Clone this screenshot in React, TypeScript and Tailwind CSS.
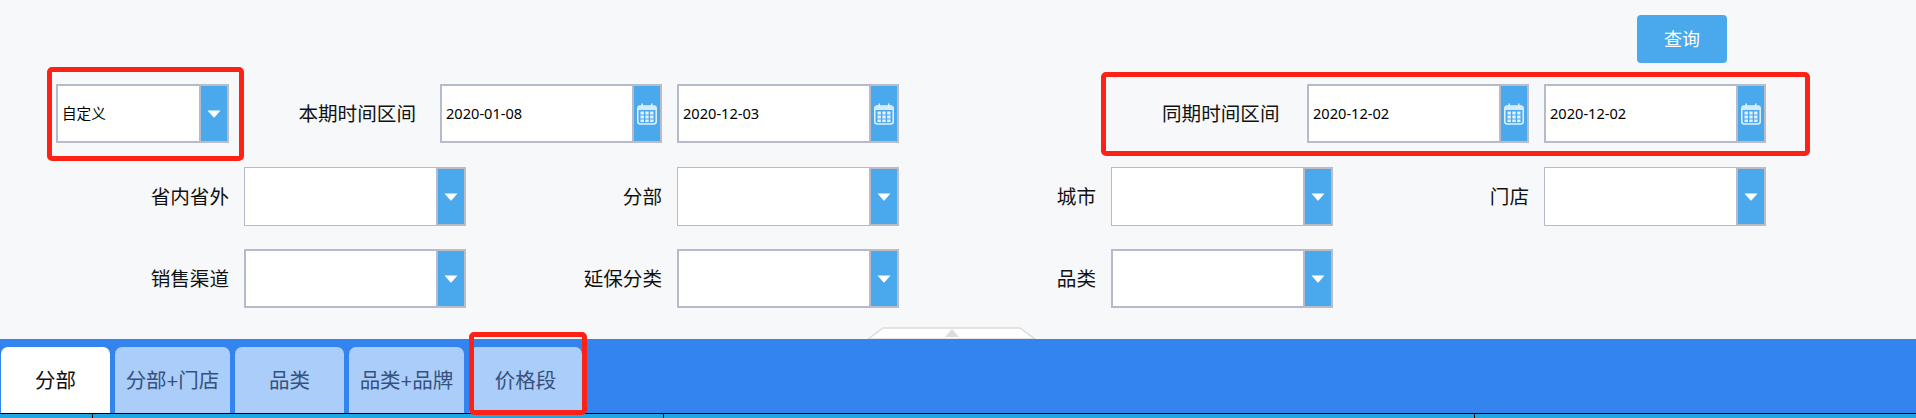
import type { ReactNode } from "react";

const FONT = "font-['Noto_Sans','Noto_Sans_CJK_SC',sans-serif]";

function Caret() {
  return (
    <svg width="14" height="8" viewBox="0 0 14 8" aria-hidden="true">
      <path d="M0.5 0.5H13.5L7.6 7.2Q7 7.8 6.4 7.2Z" fill="#fff" />
    </svg>
  );
}

function CalendarIcon() {
  return (
    <svg width="20" height="22" viewBox="0 0 20 22" aria-hidden="true">
      <rect x="0.8" y="3" width="18.4" height="18" rx="2.5" fill="none" stroke="#e3f1fc" strokeWidth="1.5" />
      <rect x="1" y="3" width="18" height="4" fill="#d4e9fa" />
      <rect x="4.5" y="0.5" width="1.5" height="4" fill="#e3f1fc" />
      <rect x="14" y="0.5" width="1.5" height="4" fill="#e3f1fc" />
      <g fill="#e3f1fc">
        <rect x="3.5" y="8.5" width="3.4" height="3" />
        <rect x="8.3" y="8.5" width="3.4" height="3" />
        <rect x="13.1" y="8.5" width="3.4" height="3" />
        <rect x="3.5" y="12.5" width="3.4" height="3" />
        <rect x="8.3" y="12.5" width="3.4" height="3" />
        <rect x="13.1" y="12.5" width="3.4" height="3" />
        <rect x="3.5" y="16.5" width="3.4" height="2.6" />
        <rect x="8.3" y="16.5" width="3.4" height="2.6" />
        <rect x="13.1" y="16.5" width="3.4" height="2.6" />
      </g>
    </svg>
  );
}

type FieldProps = {
  value?: string;
  icon: ReactNode;
  thin?: boolean;
  width?: string;
};

function Field({ value, icon, thin, width = "w-[222px]" }: FieldProps) {
  return (
    <div className={`flex h-[59px] shrink-0 ${width}`}>
      <div
        className={`flex min-w-0 flex-1 items-center border-r-0 border-[#b7b9cc] bg-white pl-[4px] text-[14.6px] text-black ${
          thin ? "border" : "border-2"
        }`}
      >
        {value}
      </div>
      <div className="flex w-[30px] shrink-0 items-center justify-center border-2 border-[#bbbcc6] border-l-[#b7b9cc] bg-[#4aa9ec]">
        {icon}
      </div>
    </div>
  );
}

function Labeled({ label, children }: { label: string; children: ReactNode }) {
  return (
    <div className="flex items-center justify-end gap-[15px]">
      <span className="text-[19.6px] text-[#111]">{label}</span>
      {children}
    </div>
  );
}

const tabs = [
  { label: "分部", width: "w-[109px]", active: true },
  { label: "分部+门店", width: "w-[115px]" },
  { label: "品类", width: "w-[109px]" },
  { label: "品类+品牌", width: "w-[115px]" },
  { label: "价格段", width: "w-[113px]" },
];

function Annotation({ className }: { className: string }) {
  return <div className={`absolute rounded-[5px] border-[5px] border-[#ff2116] ${className}`} />;
}

export default function App() {
  return (
    <div className={`relative h-[418px] w-[1916px] overflow-hidden bg-[#f7f8fa] ${FONT}`}>
      <div className="h-[339px]">
        <div className="flex justify-end pt-[15px] pr-[189px]">
          <button
            type="button"
            className="h-[48px] w-[90px] rounded-[4px] bg-[#4aa9ec] text-[18px] text-white"
          >
            查询
          </button>
        </div>

        <div className="mt-[21px] flex items-center pl-[56px]">
          <Field value="自定义" icon={<Caret />} width="w-[173px]" />
          <div className="ml-[70px] flex w-[117px] justify-end whitespace-nowrap text-[19.6px] text-[#111]">
            本期时间区间
          </div>
          <div className="ml-[24px] flex gap-[15px]">
            <Field value="2020-01-08" icon={<CalendarIcon />} />
            <Field value="2020-12-03" icon={<CalendarIcon />} />
          </div>
          <div className="ml-[263px] w-[116px] whitespace-nowrap text-[19.6px] text-[#111]">
            同期时间区间
          </div>
          <div className="ml-[29px] flex gap-[15px]">
            <Field value="2020-12-02" icon={<CalendarIcon />} />
            <Field value="2020-12-02" icon={<CalendarIcon />} />
          </div>
        </div>

        <div className="mt-6 grid grid-cols-[466px_433px_434px_433px]">
          <Labeled label="省内省外">
            <Field icon={<Caret />} thin />
          </Labeled>
          <Labeled label="分部">
            <Field icon={<Caret />} thin />
          </Labeled>
          <Labeled label="城市">
            <Field icon={<Caret />} thin />
          </Labeled>
          <Labeled label="门店">
            <Field icon={<Caret />} thin />
          </Labeled>
        </div>

        <div className="mt-[23px] grid grid-cols-[466px_433px_434px_433px]">
          <Labeled label="销售渠道">
            <Field icon={<Caret />} />
          </Labeled>
          <Labeled label="延保分类">
            <Field icon={<Caret />} />
          </Labeled>
          <Labeled label="品类">
            <Field icon={<Caret />} />
          </Labeled>
        </div>
      </div>

      <div className="flex h-[74px] gap-[5px] bg-[#3484f0] pt-2 pl-px">
        {tabs.map((tab) => (
          <div
            key={tab.label}
            className={`flex items-center justify-center rounded-t-[7px] text-[20.5px] ${tab.width} ${
              tab.active ? "bg-white text-[#111]" : "bg-[#abcdf9] text-[#36517d]"
            }`}
          >
            {tab.label}
          </div>
        ))}
      </div>

      <div className="flex h-[5px] border-t border-black bg-[#1fa7e3]">
        <div className="w-[93px] border-r border-black" />
        <div className="w-[571px] border-r border-black" />
        <div className="w-[811px] border-r border-black" />
      </div>

      {/* collapse handle sits on the edge of the tab bar */}
      <svg
        className="absolute top-[327px] left-[867px]"
        width="170"
        height="12"
        viewBox="0 0 170 12"
        aria-hidden="true"
      >
        <path d="M1 12L16 1H153L168 12Z" fill="#fff" stroke="#dcdcdc" strokeWidth="1.5" />
        <path d="M85 2L92 10H78Z" fill="#dcdcdc" />
      </svg>

      <Annotation className="top-[67px] left-[47px] h-[94px] w-[197px]" />
      <Annotation className="top-[72px] left-[1101px] h-[84px] w-[709px]" />
      <Annotation className="top-[332px] left-[469px] h-[83px] w-[118px]" />
    </div>
  );
}
